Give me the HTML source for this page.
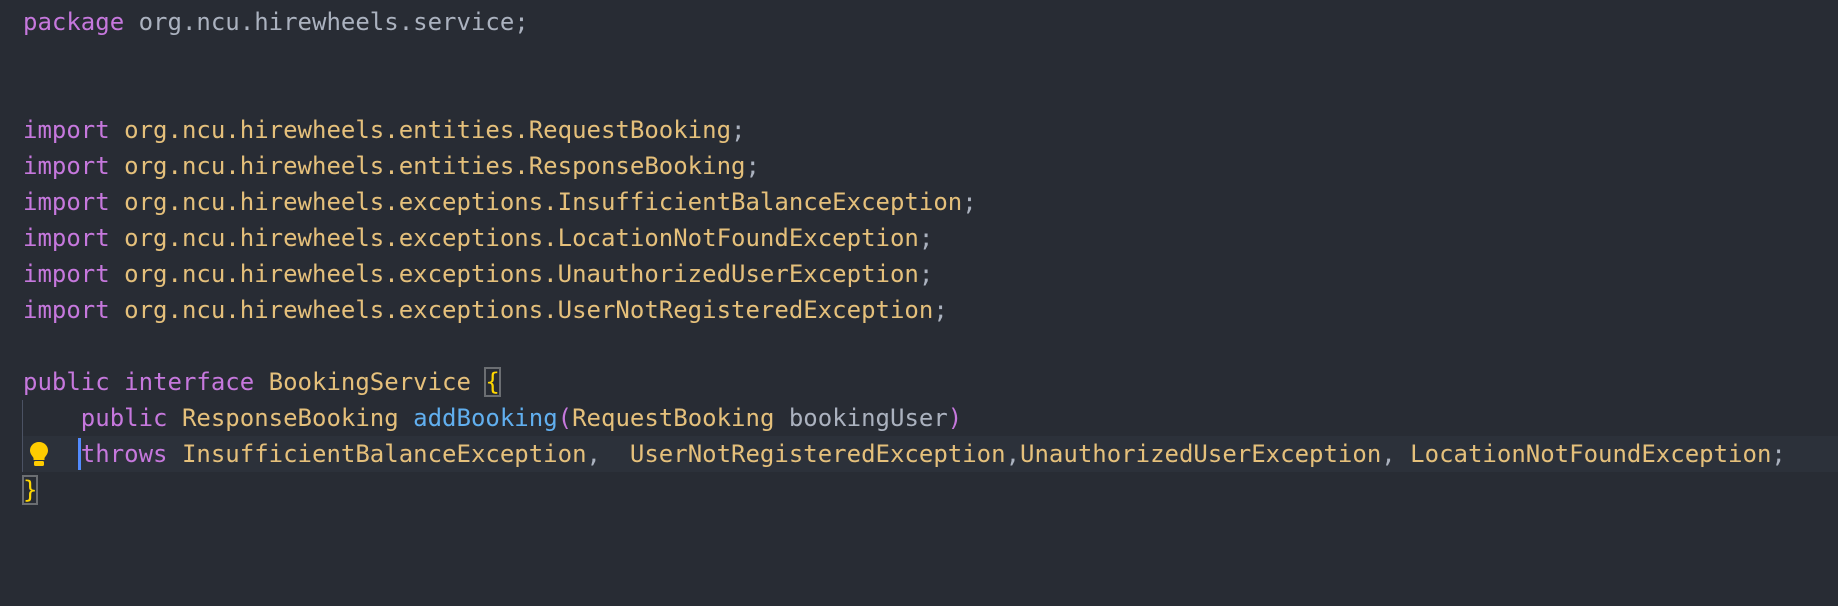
<!DOCTYPE html>
<html><head><meta charset="utf-8"><style>
html,body{margin:0;padding:0;background:#282c34;width:1838px;height:606px;overflow:hidden}
.ed{position:relative;font-family:"DejaVu Sans Mono","Liberation Mono",monospace;font-size:24px;color:#abb2bf}
.l{position:absolute;left:23px;height:36px;line-height:36px;white-space:pre}
.k{color:#c678dd}.t{color:#e5c07b}.f{color:#61afef}.p{color:#abb2bf}.b{color:#ffd700;outline:2px solid #6b6e72;outline-offset:-1px}
.hl{position:absolute;left:22px;right:0;top:436px;height:36px;background:#2c313a}
.guide{position:absolute;left:22px;top:400px;width:1px;height:72px;background:#4b5263}
.cur{position:absolute;left:78px;top:438px;width:3px;height:32px;background:#528bff}
</style></head><body><div class="ed">
<div class="hl"></div><div class="guide"></div>
<svg style="position:absolute;left:28px;top:441px" width="22" height="26" viewBox="0 0 22 26"><path d="M11 1C5.5 1 2 5 2 9.5c0 3.5 2.5 5.5 3.5 7.5v2h11v-2c1-2 3.5-4 3.5-7.5C20 5 16.5 1 11 1z" fill="#ffcc00"/><rect x="6" y="20" width="10" height="5" rx="1.5" fill="#ffcc00"/></svg>
<div class="cur"></div>
<div class="l" style="top:4px"><span class="k">package</span> org.ncu.hirewheels.service;</div>
<div class="l" style="top:112px"><span class="k">import</span> <span class="t">org.ncu.hirewheels.entities.RequestBooking</span>;</div>
<div class="l" style="top:148px"><span class="k">import</span> <span class="t">org.ncu.hirewheels.entities.ResponseBooking</span>;</div>
<div class="l" style="top:184px"><span class="k">import</span> <span class="t">org.ncu.hirewheels.exceptions.InsufficientBalanceException</span>;</div>
<div class="l" style="top:220px"><span class="k">import</span> <span class="t">org.ncu.hirewheels.exceptions.LocationNotFoundException</span>;</div>
<div class="l" style="top:256px"><span class="k">import</span> <span class="t">org.ncu.hirewheels.exceptions.UnauthorizedUserException</span>;</div>
<div class="l" style="top:292px"><span class="k">import</span> <span class="t">org.ncu.hirewheels.exceptions.UserNotRegisteredException</span>;</div>
<div class="l" style="top:364px"><span class="k">public</span> <span class="k">interface</span> <span class="t">BookingService</span> <span class="b">{</span></div>
<div class="l" style="top:400px">    <span class="k">public</span> <span class="t">ResponseBooking</span> <span class="f">addBooking</span><span class="k">(</span><span class="t">RequestBooking</span> bookingUser<span class="k">)</span></div>
<div class="l" style="top:436px">    <span class="k">throws</span> <span class="t">InsufficientBalanceException</span>,  <span class="t">UserNotRegisteredException</span>,<span class="t">UnauthorizedUserException</span>, <span class="t">LocationNotFoundException</span>;</div>
<div class="l" style="top:472px"><span class="b">}</span></div>
</div></body></html>
